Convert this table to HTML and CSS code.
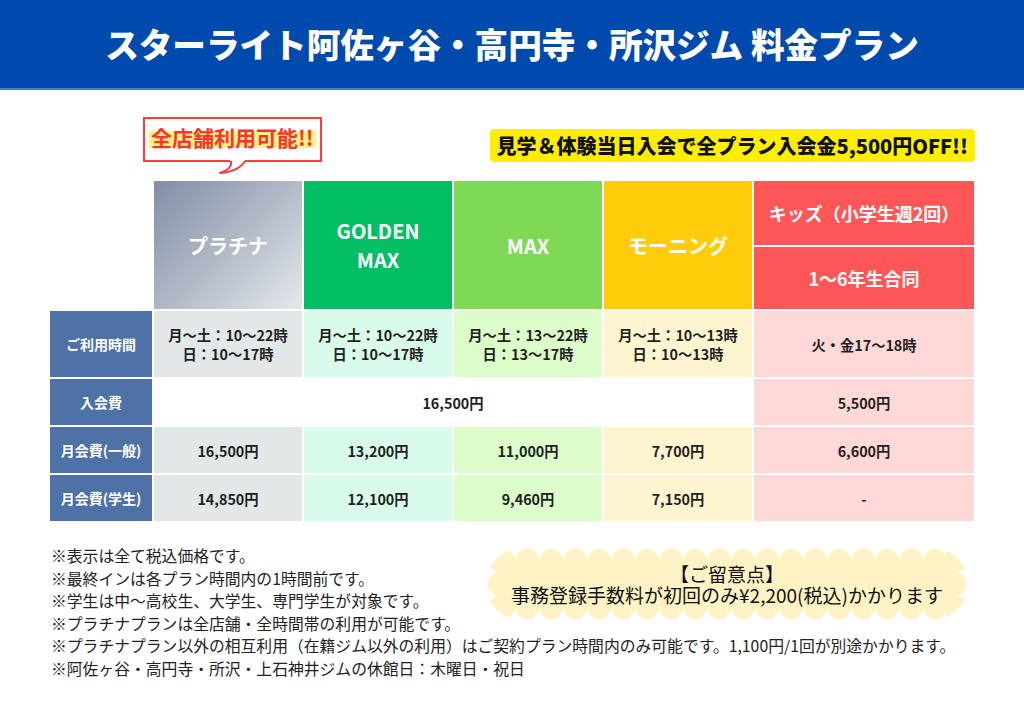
FILE: index.html
```html
<!DOCTYPE html>
<html lang="ja">
<head>
<meta charset="utf-8">
<title>料金プラン</title>
<link rel="stylesheet" href="styles.css">
</head>
<body>
<header class="hero">
  <h1 class="hero__title">スターライト阿佐ヶ谷・高円寺・所沢ジム 料金プラン</h1>
</header>
<main class="page">
  <div class="top">
    <div class="badge">
      <svg class="badge__frame" width="180" height="58" viewBox="0 0 180 58" aria-hidden="true">
        <path d="M87 44 L1 44 L1 1 L178 1 L178 44 L102 44" fill="none" stroke="#ff3b3b" stroke-width="2"/>
        <path d="M88 44 C89 50 85 53 77 56 C89 55 98 51 102 44" fill="none" stroke="#ff3b3b" stroke-width="2" stroke-linejoin="round"/>
      </svg>
      <span class="badge__text">全店舗利用可能!!</span>
    </div>
    <div class="promo">見学＆体験当日入会で全プラン入会金5,500円OFF!!</div>
  </div>

  <div class="table">
    <div class="blank"></div>
    <div class="head head--plat">プラチナ</div>
    <div class="head head--gold">GOLDEN<br>MAX</div>
    <div class="head head--max">MAX</div>
    <div class="head head--morn">モーニング</div>
    <div class="kids">
      <div class="head head--kids head--small">キッズ（小学生週2回）</div>
      <div class="head head--kids head--small">1〜6年生合同</div>
    </div>

    <div class="label">ご利用時間</div>
    <div class="cell cell--plat">月〜土：10〜22時<br>日：10〜17時</div>
    <div class="cell cell--gold">月〜土：10〜22時<br>日：10〜17時</div>
    <div class="cell cell--max">月〜土：13〜22時<br>日：13〜17時</div>
    <div class="cell cell--morn">月〜土：10〜13時<br>日：10〜13時</div>
    <div class="cell cell--kids">火・金17〜18時</div>

    <div class="label">入会費</div>
    <div class="cell cell--span">16,500円</div>
    <div class="cell cell--kids">5,500円</div>

    <div class="label">月会費(一般)</div>
    <div class="cell cell--plat">16,500円</div>
    <div class="cell cell--gold">13,200円</div>
    <div class="cell cell--max">11,000円</div>
    <div class="cell cell--morn">7,700円</div>
    <div class="cell cell--kids">6,600円</div>

    <div class="label">月会費(学生)</div>
    <div class="cell cell--plat">14,850円</div>
    <div class="cell cell--gold">12,100円</div>
    <div class="cell cell--max">9,460円</div>
    <div class="cell cell--morn">7,150円</div>
    <div class="cell cell--kids">-</div>
  </div>

  <div class="notes">
    <div class="notes__top">
      <div class="notes__col">
        <p class="note">※表示は全て税込価格です。</p>
        <p class="note">※最終インは各プラン時間内の1時間前です。</p>
        <p class="note">※学生は中〜高校生、大学生、専門学生が対象です。</p>
        <p class="note">※プラチナプランは全店舗・全時間帯の利用が可能です。</p>
      </div>
      <div class="cloud">
        <p class="cloud__line">【ご留意点】</p>
        <p class="cloud__line">事務登録手数料が初回のみ¥2,200(税込)かかります</p>
      </div>
    </div>
    <p class="note">※プラチナプラン以外の相互利用（在籍ジム以外の利用）はご契約プラン時間内のみ可能です。1,100円/1回が別途かかります。</p>
    <p class="note">※阿佐ヶ谷・高円寺・所沢・上石神井ジムの休館日：木曜日・祝日</p>
  </div>
</main>
</body>
</html>
```

FILE: styles.css
```css
* { box-sizing: border-box; }

html, body {
  margin: 0;
  padding: 0;
  background: #ffffff;
}

body {
  width: 1024px;
  height: 724px;
  overflow: hidden;
  font-family: "Noto Sans CJK JP", "Noto Sans", sans-serif;
  color: #1f1f1f;
}

.hero {
  height: 90px;
  background: #004aad;
  border-bottom: 2px solid #4d7fc8;
  display: flex;
  align-items: center;
  justify-content: center;
}

.hero__title {
  margin: 0;
  color: #ffffff;
  font-size: 33.6px;
  font-weight: 900;
  letter-spacing: 0;
  line-height: 1;
}

.page {
  padding: 0 50px;
}

/* top strip */
.top {
  height: 91px;
  display: flex;
  align-items: flex-start;
}

.badge {
  position: relative;
  width: 180px;
  height: 58px;
  margin-left: 93px;
  margin-top: 27px;
}

.badge__frame {
  position: absolute;
  left: 0;
  top: 0;
}

.badge__text {
  position: relative;
  display: inline-block;
  margin: 8px 0 0 6px;
  padding: 0 2px;
  font-size: 21px;
  font-weight: 700;
  line-height: 25px;
  color: #ff3131;
  background: linear-gradient(transparent 24%, #fff383 24%, #fff383 90%, transparent 90%);
}

.promo {
  margin-left: auto;
  margin-right: -1px;
  margin-top: 39px;
  height: 33px;
  padding: 0 7px;
  background: #ffee00;
  border-radius: 4px;
  font-size: 20px;
  font-weight: 900;
  line-height: 33px;
  color: #111111;
  white-space: nowrap;
}

/* table */
.table {
  display: grid;
  grid-template-columns: 102px 148px 148px 148px 148px 220px;
  grid-template-rows: 128px 66px 46px 46px 46px;
  gap: 2px;
}

.head {
  display: flex;
  align-items: center;
  justify-content: center;
  text-align: center;
  color: #ffffff;
  font-size: 20px;
  font-weight: 700;
  line-height: 29px;
}

.head--plat { background: linear-gradient(135deg, #838da8 0%, #b1b8c6 50%, #e5e9ec 100%); font-weight: 600; }
.head--gold { background: #00bf63; }
.head--max  { background: #7ed957; }
.head--morn { background: #ffcc0a; }
.head--kids { background: #ff5757; }
.head--small { font-size: 18px; font-weight: 600; }

.kids {
  display: grid;
  grid-template-rows: 64px 62px;
  gap: 2px;
}

.label {
  display: flex;
  align-items: center;
  justify-content: center;
  background: #4e72a5;
  color: #ffffff;
  font-size: 14px;
  font-weight: 700;
}

.cell {
  display: flex;
  align-items: center;
  justify-content: center;
  text-align: center;
  font-size: 14.3px;
  font-weight: 700;
  line-height: 19px;
  color: #1f1f1f;
}

.cell--plat { background: #e2e7e7; }
.cell--gold { background: #d8fce9; }
.cell--max  { background: #dcfcca; }
.cell--morn { background: #fff4d0; }
.cell--kids { background: #ffd8d8; }
.cell--span { grid-column: span 4; background: #ffffff; }

/* notes */
.notes {
  margin-top: 24px;
  padding-left: 1px;
}

.notes__top {
  display: flex;
  justify-content: space-between;
  align-items: flex-start;
}

.note {
  margin: 0;
  font-size: 15.8px;
  line-height: 22.5px;
  color: #222222;
  white-space: nowrap;
}

.cloud {
  --c: #fff3c6;
  flex: none;
  width: 480px;
  height: 72px;
  margin: 3px 7px 0 0;
  border-radius: 34px;
  display: flex;
  flex-direction: column;
  align-items: center;
  justify-content: center;
  background:
    radial-gradient(circle, var(--c) 11px, transparent 11.6px) 4px 0 / 24px 24px repeat-x,
    radial-gradient(circle, var(--c) 11px, transparent 11.6px) 4px 100% / 24px 24px repeat-x,
    radial-gradient(circle, var(--c) 11px, transparent 11.6px) 0 0 / 24px 24px repeat-y,
    radial-gradient(circle, var(--c) 11px, transparent 11.6px) 100% 0 / 24px 24px repeat-y,
    linear-gradient(var(--c), var(--c)) 50% 50% / calc(100% - 20px) calc(100% - 20px) no-repeat;
}

.cloud__line {
  margin: 0;
  font-size: 19px;
  line-height: 21px;
  color: #111111;
  white-space: nowrap;
}
```
